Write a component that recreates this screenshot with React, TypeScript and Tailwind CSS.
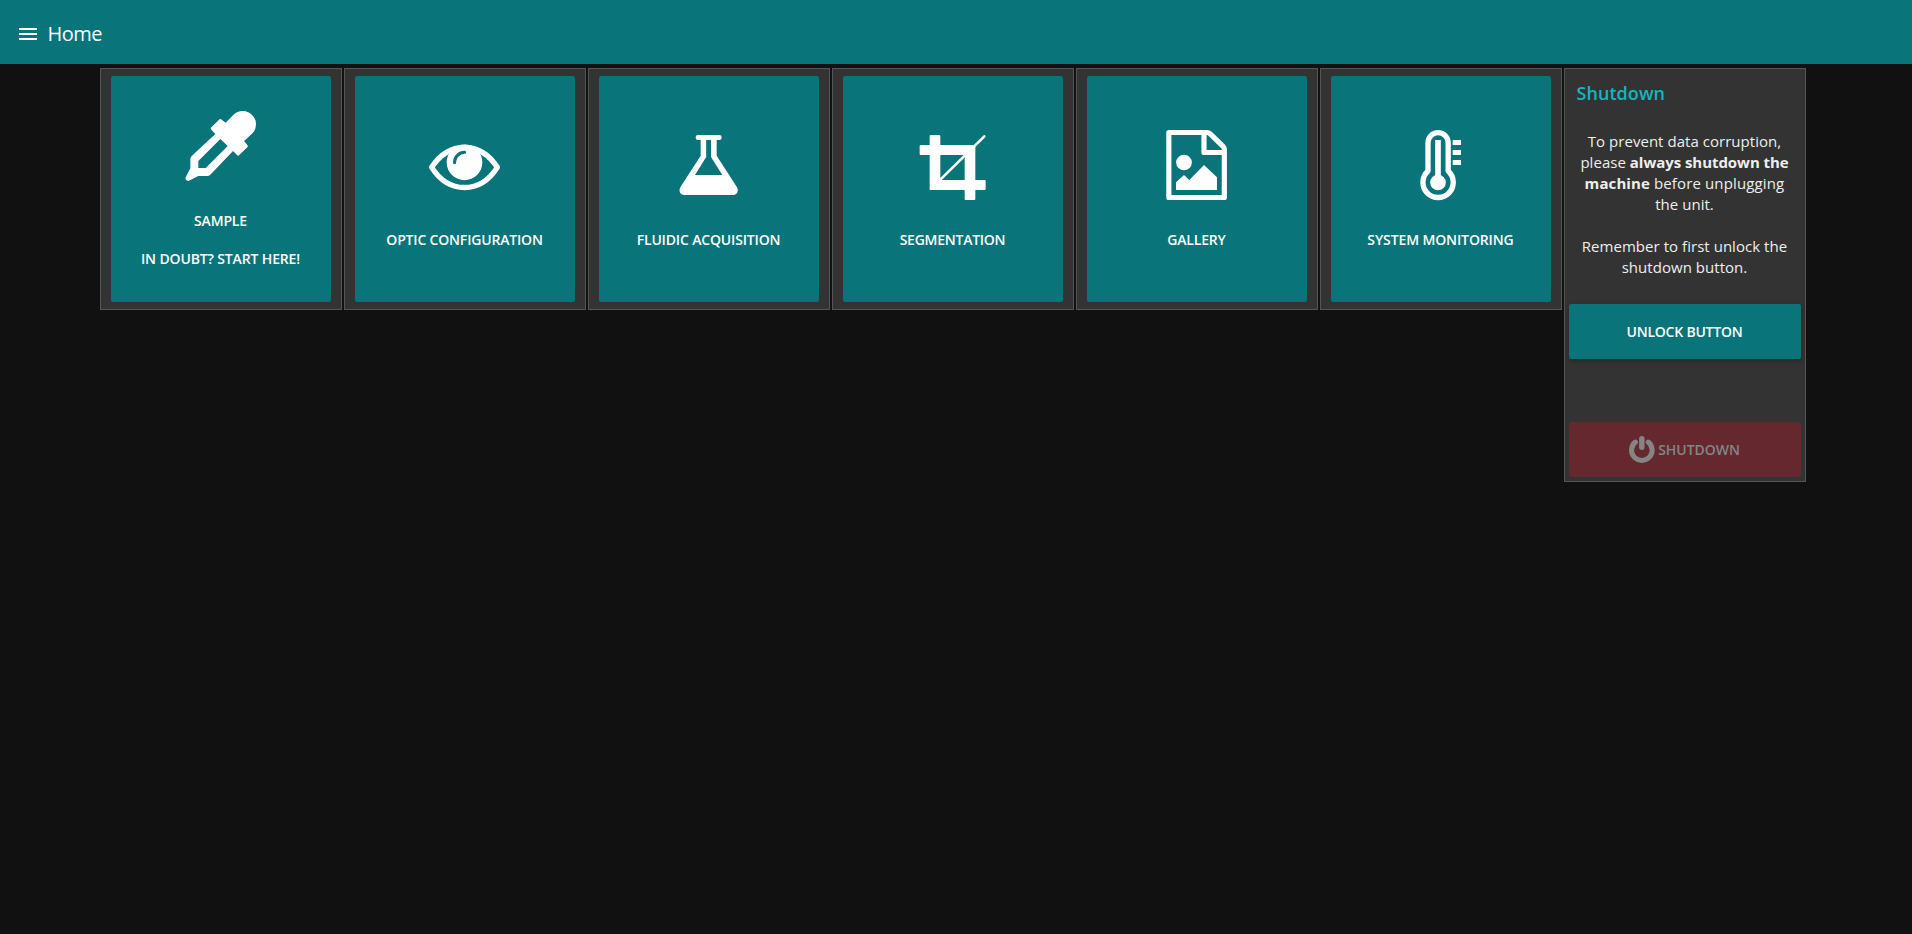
import type { ReactNode } from "react";

function Icon({ viewBox, children }: { viewBox: string; children: ReactNode }) {
  return (
    <svg viewBox={viewBox} className="h-20 w-20 shrink-0" fill="#fff" stroke="none">
      {children}
    </svg>
  );
}

const Dropper = (
  <Icon viewBox="273 138 240 240">
    <path
      fillRule="evenodd"
      d="M429.700 164.700 A40 40 0 0 1 486.300 221.300 L462 243 L472 255 Q475 259 472 262 L448 285 Q444 289 441 285 L429 273 L361 344 Q357 348 352 348 L325 348 L297 362 Q293 364 289 360 Q285 356 287 352 L301 325 V297 Q301 292 305 288 L376 222 L364 209 Q360 206 364 202 L387 179 Q391 175 395 179 L407 188 Z M391 237 L325 303 V324 H347 L413 258 Z"
    />
  </Icon>
);

const Eye = (
  <Icon viewBox="255 195 240 240">
    <path
      d="M275 322 C300 284 335 262.500 373.500 262.500 S447 284 472 322 C447 361 412 382.500 373.500 382.500 S300 361 275 322 Z"
      fill="none"
      stroke="#fff"
      strokeWidth="16"
      strokeLinejoin="round"
    />
    <circle cx="373.500" cy="307" r="53.500" />
    <path d="M343.500 308 A30.500 30.500 0 0 1 374 277" fill="none" stroke="#097479" strokeWidth="9" strokeLinecap="round" />
  </Icon>
);

const Flask = (
  <Icon viewBox="267 195 240 240">
    <rect x="347" y="225" width="78" height="15" rx="7" />
    <path
      fillRule="evenodd"
      d="M362 238 V287 L301 382 C295 393 301 405 312 405 H460 C471 405 477 393 471 382 L410 287 V238 Z M378.500 240 V291 L345 345 H427 L393 291 V240 Z"
    />
  </Icon>
);

const Crop = (
  <Icon viewBox="264 195 240 240">
    <path
      fillRule="evenodd"
      d="M317 225 H343 Q346 225 346 228 V255 H451 V360 H479 Q482 360 482 363 V387 Q482 390 479 390 H451 V417 Q451 420 448 420 H422 Q419 420 419 417 V390 H314 V285 H287 Q284 285 284 282 V258 Q284 255 287 255 H314 V228 Q314 225 317 225 Z M346 285 V360 H419 V285 Z"
    />
    <path d="M478 229 L346 359" fill="none" stroke="#fff" strokeWidth="8" strokeLinecap="round" />
  </Icon>
);

const FileImage = (
  <Icon viewBox="261 195 240 240">
    <path
      d="M296.500 217.500 H411 Q416 217.500 420 221 L459 259 Q463 263 463 268 V412.500 H296.500 Z"
      fill="none"
      stroke="#fff"
      strokeWidth="15.500"
      strokeLinejoin="round"
    />
    <path d="M402 218 V277.500 H463" fill="none" stroke="#fff" strokeWidth="15.500" strokeLinejoin="round" />
    <circle cx="342" cy="307.500" r="23.500" />
    <path d="M318 390 V367 L342 345 L358 360 L402 315 L441 352 V390 Z" />
  </Icon>
);

const Thermometer = (
  <Icon viewBox="273 195 240 240">
    <path
      d="M354 333 V248 A30 30 0 0 1 414.500 248 V333 A45.500 45.500 0 1 1 354 333 Z"
      fill="none"
      stroke="#fff"
      strokeWidth="16"
      strokeLinejoin="round"
    />
    <rect x="375.500" y="240" width="17" height="115" />
    <circle cx="384" cy="367.500" r="23.500" />
    <path d="M428 240 H453 V255 H428 Z M428 270 H453 V285 H428 Z M428 300 H453 V315 H428 Z" />
  </Icon>
);

const tiles: { icon: ReactNode; label: string; hint?: string; tracking: string }[] = [
  { icon: Dropper, label: "Sample", hint: "In doubt? Start here!", tracking: "tracking-[-0.14px]" },
  { icon: Eye, label: "Optic configuration", tracking: "tracking-[-0.18px]" },
  { icon: Flask, label: "Fluidic Acquisition", tracking: "tracking-[-0.16px]" },
  { icon: Crop, label: "Segmentation", tracking: "tracking-[-0.25px]" },
  { icon: FileImage, label: "Gallery", tracking: "tracking-[-0.2px]" },
  { icon: Thermometer, label: "System monitoring", tracking: "tracking-[-0.12px]" },
];

export default function App() {
  return (
    <div className="flex min-h-screen flex-col bg-[#111111] font-['Open_Sans','Noto_Sans',sans-serif] text-[#eeeeee]">
      <header className="flex h-16 items-center bg-[#097479] pt-1 pl-4">
        <svg viewBox="0 0 24 24" className="h-6 w-6" fill="#fff">
          <path d="M3 18h18v-2H3v2zm0-5h18v-2H3v2zm0-7v2h18V6H3z" />
        </svg>
        <h1 className="ml-[7.5px] text-[20px] leading-6 tracking-[-0.5px] text-white">Home</h1>
      </header>

      <main className="flex items-start gap-0.5 pt-1 pl-[100px]">
        {tiles.map((t) => (
          <section key={t.label} className="h-[242px] w-[242px] border border-[#555555] bg-[#333333] px-2.5 py-[7px]">
            <button
              className={`flex h-[226px] w-[220px] flex-col items-center justify-center rounded-[2px] bg-[#097479] pb-1 text-[14px] leading-[19px] font-semibold whitespace-nowrap text-white uppercase ${t.tracking}`}
            >
              {t.icon}
              <span className="mt-[25px] pr-px">{t.label}</span>
              {t.hint && <span className="mt-[19px] pr-px">{t.hint}</span>}
            </button>
          </section>
        ))}

        <section className="flex h-[414px] w-[242px] flex-col border border-[#555555] bg-[#333333] px-1">
          <h2 className="mt-3 ml-[7.5px] text-[18px] leading-6 font-semibold tracking-[0.05px] text-[#0eb8c0]">Shutdown</h2>
          <div className="mt-[26px] pr-px text-center text-[15px] leading-[21px] tracking-[0.04px] whitespace-nowrap">
            <p>
              To prevent data corruption,
              <br />
              please <b className="tracking-[-0.05px]">always shutdown the</b>
              <br />
              <b className="tracking-[0.1px]">machine</b> <span className="tracking-[0.14px]">before unplugging</span>
              <br />
              the unit.
            </p>
            <p className="mt-[21px]">
              Remember to first unlock the
              <br />
              shutdown button.
            </p>
          </div>
          <button className="mt-auto flex h-[55px] shrink-0 items-center justify-center rounded-[2px] bg-[#097479] pr-px text-[14px] font-semibold tracking-[-0.22px] text-white uppercase shadow-[0_2px_5px_0_rgba(0,0,0,0.26)]">
            Unlock button
          </button>
          <button
            disabled
            className="mt-[63px] mb-1 flex h-[55px] shrink-0 items-center justify-center gap-[3px] rounded-[2px] bg-[#64282e] pr-px text-[14px] font-semibold tracking-[-0.05px] text-[#858585] uppercase"
          >
            <svg viewBox="222 468 77 80" className="h-[27px] w-[26px]" fill="none" stroke="#858585" strokeLinecap="round">
              <path d="M241 486 A30.500 30.500 0 1 0 279 486" strokeWidth="15" />
              <path d="M260 476 V501" strokeWidth="16" />
            </svg>
            Shutdown
          </button>
        </section>
      </main>
    </div>
  );
}
